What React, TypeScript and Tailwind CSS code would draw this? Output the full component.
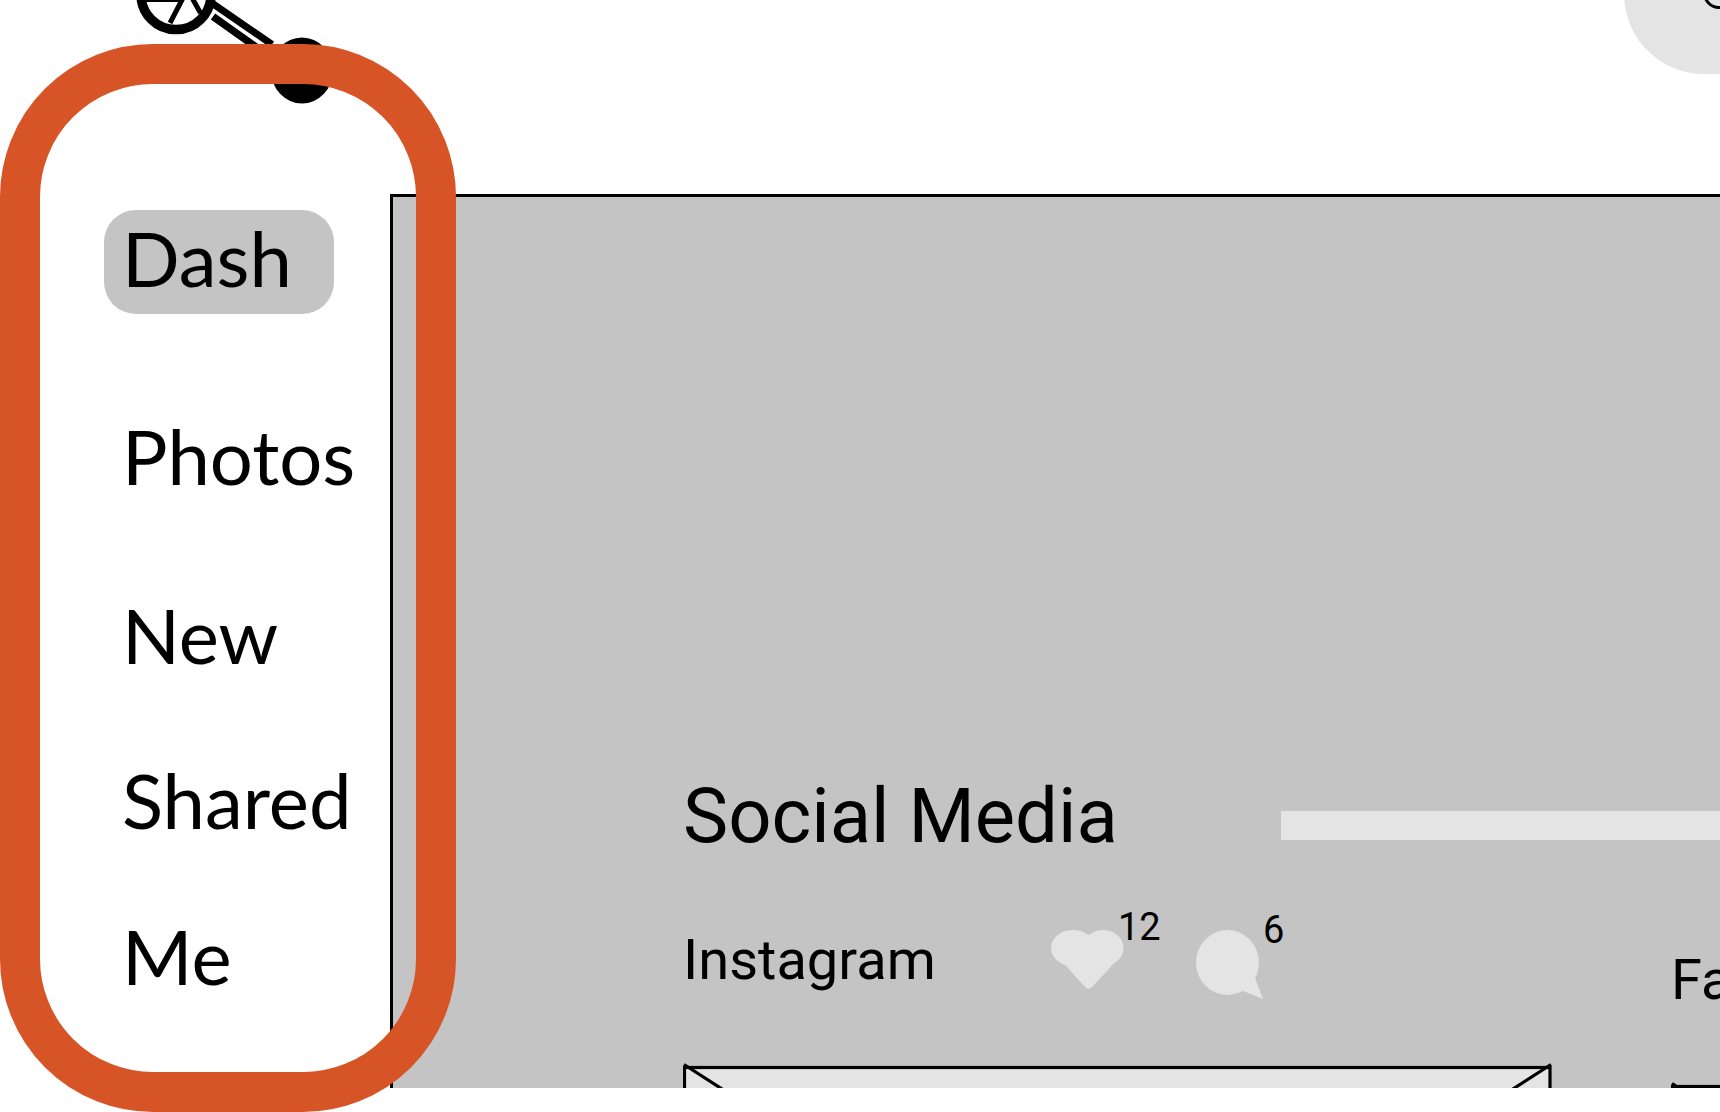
import React from "react";

const navItems = [
  { label: "Dash", spacing: "mt-0", active: true },
  { label: "Photos", spacing: "mt-[94px]", active: false },
  { label: "New", spacing: "mt-[75px]", active: false },
  { label: "Shared", spacing: "mt-[61px]", active: false },
  { label: "Me", spacing: "mt-[52px]", active: false },
];

function Logo() {
  return (
    <svg className="ml-[130px] block h-[110px] w-[210px] shrink-0" viewBox="130 0 210 110" aria-label="Logo" role="img">
      <circle cx="176" cy="-5.4" r="35" fill="none" stroke="#000" strokeWidth="9.5" />
      <path d="M146 0.5H181" stroke="#000" strokeWidth="3" />
      <path d="M184 -4L170 23M191 -4L200.500 13" stroke="#000" strokeWidth="5" />
      <path d="M209 1L272 44.5" stroke="#000" strokeWidth="7" />
      <path d="M213 16.5L258 48.5" stroke="#000" strokeWidth="7.5" />
      <ellipse cx="302" cy="70.5" rx="31" ry="33" fill="#000" />
    </svg>
  );
}

function HeartIcon() {
  return (
    <svg className="mt-[26px] block h-[60px] w-[73px] shrink-0" viewBox="1051 930 73 60" aria-label="Likes" role="img" fill="#e4e4e4">
      <ellipse cx="1073" cy="948" rx="22" ry="18" />
      <ellipse cx="1103" cy="948" rx="20.5" ry="18" />
      <path d="M1063 962.500L1085 987Q1088.500 990.500 1092 987L1118 959L1100 940H1070Z" />
    </svg>
  );
}

function CommentIcon() {
  return (
    <svg className="mt-[26px] block h-[70px] w-[68px] shrink-0" viewBox="1195 930 68 70" aria-label="Comments" role="img" fill="#e4e4e4">
      <ellipse cx="1227.500" cy="962.500" rx="31.5" ry="32.5" />
      <path d="M1255 978L1263 999L1243 991L1235 970Z" />
    </svg>
  );
}

function PictureFrame({ label, className }: { label: string; className: string }) {
  return (
    <div className={`${className} w-[869px] overflow-hidden`}>
      <svg className="block" width="869" height="600" viewBox="0 0 869 600" role="img" aria-label={label}>
        <rect x="1.5" y="4.5" width="865.500" height="594" fill="#e4e4e4" stroke="#000" strokeWidth="3.2" />
        <path d="M1 1.500L868 560M868 1.500L1 560" stroke="#000" strokeWidth="3.2" />
      </svg>
    </div>
  );
}

export default function App() {
  return (
    <div className="relative flex min-h-screen flex-col overflow-hidden bg-white pb-6 font-[Roboto,sans-serif] text-black">
      <header className="flex h-[194px] items-start justify-between">
        <Logo />
        <button className="h-[74px] w-24 overflow-hidden" aria-label="Search">
          <svg className="block h-[74px] w-24" viewBox="1624 0 96 74">
            <rect x="1624" y="-86" width="200" height="160" rx="80" fill="#e4e4e4" />
            <circle cx="1719" cy="-7" r="14.5" fill="none" stroke="#000" strokeWidth="3" />
          </svg>
        </button>
      </header>
      <div className="flex flex-1">
        <nav className="flex w-[390px] shrink-0 flex-col items-start pt-4 pl-[104px] font-[Lato,sans-serif] text-[76px]/[96px]">
          {navItems.map((item) => (
            <a
              key={item.label}
              href="#"
              aria-current={item.active ? "page" : undefined}
              className={`${item.spacing} ${item.active ? "w-[230px] rounded-[32px] bg-[#c4c4c4]" : ""} block h-[104px] pl-[18px]`}
            >
              {item.label}
            </a>
          ))}
        </nav>
        <main className="flex min-w-0 flex-1 flex-col overflow-hidden border-t-[3px] border-l-[3px] border-black bg-[#c4c4c4] pt-[573px] pl-[290px]">
          <div className="flex items-center">
            <h1 className="w-[598px] shrink-0 text-[76px]/[92px]">Social Media</h1>
            <div className="mt-[18px] h-[29px] flex-1 bg-[#e4e4e4]" />
          </div>
          <div className="flex">
            <section className="w-[869px] shrink-0 pt-[42px]">
              <div className="flex h-[90px]">
                <h2 className="w-[368px] shrink-0 pt-[22px] text-[56px]/[68px]">Instagram</h2>
                <HeartIcon />
                <span className="-ml-[6px] w-[77px] text-[38px]/[46px]">12</span>
                <CommentIcon />
                <span className="mt-[3px] text-[38px]/[46px]">6</span>
              </div>
              <PictureFrame label="Instagram photo" className="mt-[69px] h-[25px]" />
            </section>
            <section className="ml-[119px] shrink-0 pt-[84px]">
              <h2 className="text-[56px]/[68px]">Facebook</h2>
              <PictureFrame label="Facebook photo" className="mt-[68px] h-[6px]" />
            </section>
          </div>
        </main>
      </div>
      <div className="pointer-events-none absolute top-[44px] bottom-0 left-0 w-[456px] rounded-[153px] border-[40px] border-[#d75426]" />
    </div>
  );
}
